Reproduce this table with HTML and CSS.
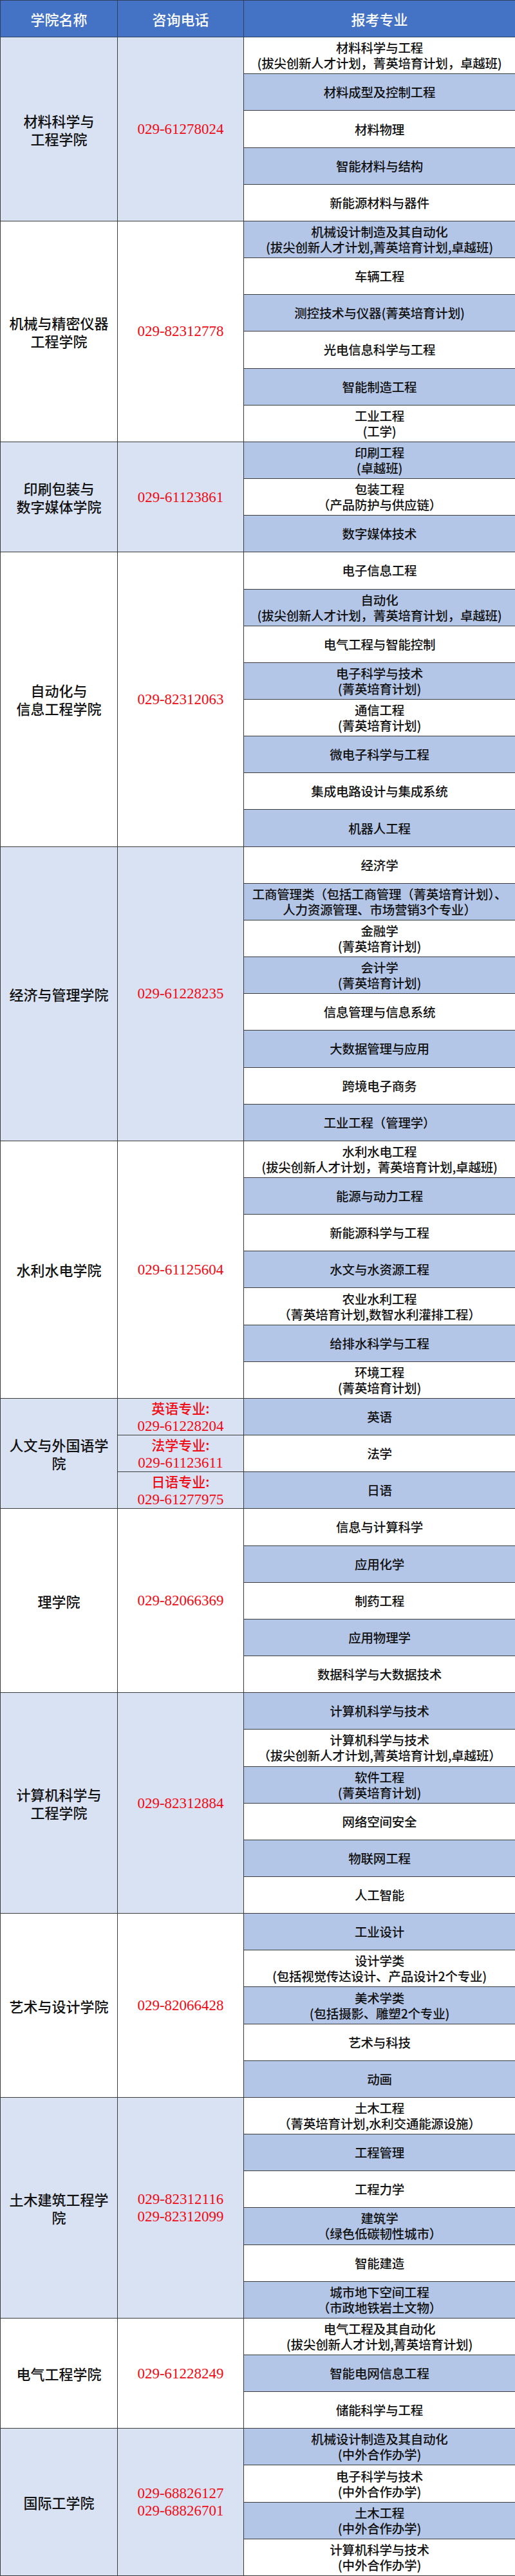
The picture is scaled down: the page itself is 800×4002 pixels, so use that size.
FILE: index.html
```html
<!DOCTYPE html>
<html lang="zh-CN">
<head>
<meta charset="utf-8">
<title>报考专业</title>
<link rel="stylesheet" href="styles.css">
</head>
<body>
<table class="grid">
<colgroup><col class="c1"><col class="c2"><col class="c3"></colgroup>
<thead>
<tr><th>学院名称</th><th>咨询电话</th><th>报考专业</th></tr>
</thead>
<tbody>
<tr><td class="college shade" rowspan="5">材料科学与<br>工程学院</td><td class="phone shade" rowspan="5">029-61278024</td><td class="major">材料科学与工程<br>(拔尖创新人才计划，菁英培育计划，卓越班)</td></tr>
<tr><td class="major b">材料成型及控制工程</td></tr>
<tr><td class="major">材料物理</td></tr>
<tr><td class="major b">智能材料与结构</td></tr>
<tr><td class="major">新能源材料与器件</td></tr>

<tr><td class="college" rowspan="6">机械与精密仪器<br>工程学院</td><td class="phone" rowspan="6">029-82312778</td><td class="major b">机械设计制造及其自动化<br>(拔尖创新人才计划,菁英培育计划,卓越班)</td></tr>
<tr><td class="major">车辆工程</td></tr>
<tr><td class="major b">测控技术与仪器(菁英培育计划)</td></tr>
<tr><td class="major">光电信息科学与工程</td></tr>
<tr><td class="major b">智能制造工程</td></tr>
<tr><td class="major">工业工程<br>(工学)</td></tr>

<tr><td class="college shade" rowspan="3">印刷包装与<br>数字媒体学院</td><td class="phone shade" rowspan="3">029-61123861</td><td class="major b">印刷工程<br>(卓越班)</td></tr>
<tr><td class="major">包装工程<br>（产品防护与供应链）</td></tr>
<tr><td class="major b">数字媒体技术</td></tr>

<tr><td class="college" rowspan="8">自动化与<br>信息工程学院</td><td class="phone" rowspan="8">029-82312063</td><td class="major">电子信息工程</td></tr>
<tr><td class="major b">自动化<br>(拔尖创新人才计划，菁英培育计划，卓越班)</td></tr>
<tr><td class="major">电气工程与智能控制</td></tr>
<tr><td class="major b">电子科学与技术<br>(菁英培育计划)</td></tr>
<tr><td class="major">通信工程<br>(菁英培育计划)</td></tr>
<tr><td class="major b">微电子科学与工程</td></tr>
<tr><td class="major">集成电路设计与集成系统</td></tr>
<tr><td class="major b">机器人工程</td></tr>

<tr><td class="college shade" rowspan="8">经济与管理学院</td><td class="phone shade" rowspan="8">029-61228235</td><td class="major">经济学</td></tr>
<tr><td class="major b">工商管理类（包括工商管理（菁英培育计划）、<br>人力资源管理、市场营销3个专业）</td></tr>
<tr><td class="major">金融学<br>(菁英培育计划)</td></tr>
<tr><td class="major b">会计学<br>(菁英培育计划)</td></tr>
<tr><td class="major">信息管理与信息系统</td></tr>
<tr><td class="major b">大数据管理与应用</td></tr>
<tr><td class="major">跨境电子商务</td></tr>
<tr><td class="major b">工业工程（管理学）</td></tr>

<tr><td class="college" rowspan="7">水利水电学院</td><td class="phone" rowspan="7">029-61125604</td><td class="major">水利水电工程<br>(拔尖创新人才计划，菁英培育计划,卓越班)</td></tr>
<tr><td class="major b">能源与动力工程</td></tr>
<tr><td class="major">新能源科学与工程</td></tr>
<tr><td class="major b">水文与水资源工程</td></tr>
<tr><td class="major">农业水利工程<br>（菁英培育计划,数智水利灌排工程）</td></tr>
<tr><td class="major b">给排水科学与工程</td></tr>
<tr><td class="major">环境工程<br>(菁英培育计划)</td></tr>

<tr><td class="college shade" rowspan="3">人文与外国语学<br>院</td><td class="phone shade"><span class="label">英语专业:</span><br>029-61228204</td><td class="major b">英语</td></tr>
<tr><td class="phone shade"><span class="label">法学专业:</span><br>029-61123611</td><td class="major">法学</td></tr>
<tr><td class="phone shade"><span class="label">日语专业:</span><br>029-61277975</td><td class="major b">日语</td></tr>

<tr><td class="college" rowspan="5">理学院</td><td class="phone" rowspan="5">029-82066369</td><td class="major">信息与计算科学</td></tr>
<tr><td class="major b">应用化学</td></tr>
<tr><td class="major">制药工程</td></tr>
<tr><td class="major b">应用物理学</td></tr>
<tr><td class="major">数据科学与大数据技术</td></tr>

<tr><td class="college shade" rowspan="6">计算机科学与<br>工程学院</td><td class="phone shade" rowspan="6">029-82312884</td><td class="major b">计算机科学与技术</td></tr>
<tr><td class="major">计算机科学与技术<br>（拔尖创新人才计划,菁英培育计划,卓越班）</td></tr>
<tr><td class="major b">软件工程<br>(菁英培育计划)</td></tr>
<tr><td class="major">网络空间安全</td></tr>
<tr><td class="major b">物联网工程</td></tr>
<tr><td class="major">人工智能</td></tr>

<tr><td class="college" rowspan="5">艺术与设计学院</td><td class="phone" rowspan="5">029-82066428</td><td class="major b">工业设计</td></tr>
<tr><td class="major">设计学类<br>(包括视觉传达设计、产品设计2个专业)</td></tr>
<tr><td class="major b">美术学类<br>(包括摄影、雕塑2个专业)</td></tr>
<tr><td class="major">艺术与科技</td></tr>
<tr><td class="major b">动画</td></tr>

<tr><td class="college shade" rowspan="6">土木建筑工程学<br>院</td><td class="phone shade" rowspan="6">029-82312116<br>029-82312099</td><td class="major">土木工程<br>（菁英培育计划,水利交通能源设施）</td></tr>
<tr><td class="major b">工程管理</td></tr>
<tr><td class="major">工程力学</td></tr>
<tr><td class="major b">建筑学<br>（绿色低碳韧性城市）</td></tr>
<tr><td class="major">智能建造</td></tr>
<tr><td class="major b">城市地下空间工程<br>（市政地铁岩土文物）</td></tr>

<tr><td class="college" rowspan="3">电气工程学院</td><td class="phone" rowspan="3">029-61228249</td><td class="major">电气工程及其自动化<br>(拔尖创新人才计划,菁英培育计划)</td></tr>
<tr><td class="major b">智能电网信息工程</td></tr>
<tr><td class="major">储能科学与工程</td></tr>

<tr><td class="college shade" rowspan="4">国际工学院</td><td class="phone shade" rowspan="4">029-68826127<br>029-68826701</td><td class="major b">机械设计制造及其自动化<br>(中外合作办学)</td></tr>
<tr><td class="major">电子科学与技术<br>(中外合作办学)</td></tr>
<tr><td class="major b">土木工程<br>(中外合作办学)</td></tr>
<tr><td class="major">计算机科学与技术<br>(中外合作办学)</td></tr>
</tbody>
</table>
</body>
</html>
```
FILE: styles.css
```css
html, body {
  margin: 0;
  padding: 0;
  background: #ffffff;
}

.grid {
  width: 800px;
  border-collapse: collapse;
  table-layout: fixed;
  font-family: "Noto Sans CJK SC", "Noto Sans", sans-serif;
  font-weight: 500;
  color: #111111;
}

.c1 { width: 182px; }
.c2 { width: 196px; }
.c3 { width: 422px; }

.grid tr {
  height: 57.17px;
}

.grid th,
.grid td {
  border: 1px solid #3a3a3a;
  text-align: center;
  vertical-align: middle;
  padding: 0 2px;
}

.grid th {
  background: #4472c4;
  color: #ffffff;
  font-size: 22px;
  font-weight: 500;
  border-color: #2f3f5f;
}

.college {
  font-size: 22px;
  line-height: 28px;
}

.phone {
  color: #f00a14;
  font-family: "Liberation Serif", "Times New Roman", serif;
  font-weight: 400;
  font-size: 23px;
  line-height: 27px;
}

.label {
  font-family: "Noto Sans CJK SC", sans-serif;
  font-weight: 500;
  font-size: 21px;
}

.major {
  font-size: 19.5px;
  line-height: 24px;
  white-space: nowrap;
  letter-spacing: -0.2px;
}

.shade {
  background: #d9e2f3;
}

.b {
  background: #b4c6e7;
}
```
